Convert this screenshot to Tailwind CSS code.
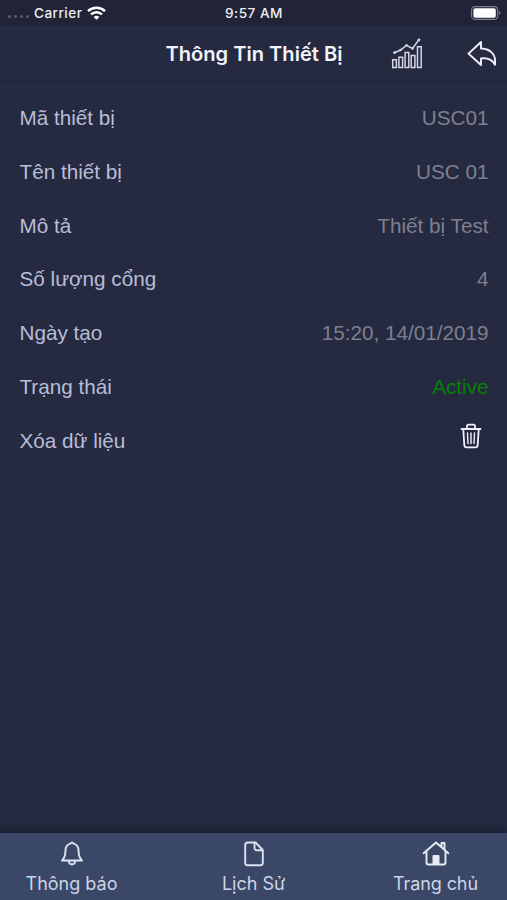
<!doctype html>
<html lang="vi">

<head>
    <meta charset="UTF-8">
    <meta name="viewport" content="width=device-width, initial-scale=1.0">
    <script src="https://cdn.jsdelivr.net/npm/@tailwindcss/browser@4"></script>
    <title>Thông Tin Thiết Bị</title>
</head>

<body class="h-[900px] bg-[#252a40] flex flex-col overflow-hidden font-['Inter',sans-serif]">
    <!-- status bar -->
    <div class="h-[26px] shrink-0 bg-[#202436] grid grid-cols-3 items-center pl-2 pr-[6px] text-[13.6px] font-medium text-[#eceef6]">
        <div class="flex items-center">
            <div class="flex gap-[3px] mt-2 mr-[5px]">
                <i class="size-[3px] rounded-full bg-[#5b5e6e]"></i>
                <i class="size-[3px] rounded-full bg-[#5b5e6e]"></i>
                <i class="size-[3px] rounded-full bg-[#5b5e6e]"></i>
                <i class="size-[3px] rounded-full bg-[#5b5e6e]"></i>
            </div>
            <span class="tracking-[0.45px] pt-px">Carrier</span>
            <svg class="w-[19px] h-[14px] ml-[5px]" viewBox="0 0 19 14" fill="none" stroke="#fff" stroke-width="2.5">
                <path d="M1 5.2C5.8.7 13.200.7 18 5.200" />
                <path d="M4 8.400c3.200-2.900 7.800-2.900 11 0" />
                <path d="M9.500 13.800 6.600 10.900c1.700-1.500 4.100-1.500 5.800 0z" fill="#fff" stroke="none" />
            </svg>
        </div>
        <div class="text-center tracking-[0.5px] pt-px pr-[1px]">9:57 AM</div>
        <div class="flex justify-end">
            <svg class="w-[30px] h-[14px]" viewBox="0 0 30 14">
                <rect x=".6" y=".6" width="26" height="12.800" rx="3.500" fill="none" stroke="#7d7f8c" stroke-width="1.100" />
                <rect x="2.400" y="2.300" width="22.400" height="9.400" rx="1.800" fill="#fff" />
                <path d="M28 4.800c1.800.7 1.800 3.700 0 4.400z" fill="#7d7f8c" />
            </svg>
        </div>
    </div>

    <!-- title bar -->
    <div class="h-[56px] shrink-0 border-b border-[#1f2336] flex items-center relative">
        <h1 id="title" class="w-full pl-px text-center text-[20.1px] leading-[30px] font-semibold text-[#f1f3fb]">Thông Tin Thiết Bị</h1>
        <div class="absolute right-[9.5px] top-[12px] flex gap-[43.5px]">
            <svg class="w-[32px] h-[32px]" viewBox="0 0 32 32" fill="none" stroke="#d3d6e4" stroke-width="1.500">
                <path d="M1.700 21.700h3.700v7.700H1.700zM7.900 19.200h3.700v10.200H7.900zM14.100 14.600h3.700v14.800h-3.700zM20.200 17.600h3.700v11.800h-3.700zM26.500 8.700h3.700v20.700h-3.700z" />
                <path d="M3.500 14.700 9.500 12l6-4.700 6 3.200 6-8.300" />
                <g fill="#d3d6e4" stroke="none">
                    <circle cx="3.500" cy="14.700" r="1.400" />
                    <circle cx="9.500" cy="12" r="1.200" />
                    <circle cx="15.500" cy="7.300" r="1.200" />
                    <circle cx="21.500" cy="10.500" r="1.200" />
                    <circle cx="28" cy="1.900" r="1.400" />
                </g>
            </svg>
            <svg class="w-[31px] h-[32px]" viewBox="0 0 31 32" fill="none" stroke="#f1f3fb" stroke-width="1.900" stroke-linejoin="round">
                <path d="M14 4 1.500 15.600 14 27v-6.600c6.500-.6 11.500 1.400 14 6.300C29.300 16.800 24 10.800 14 10.500z" />
            </svg>
        </div>
    </div>

    <!-- device details -->
    <div class="flex-1 pt-[9px] pl-[19.5px] pr-[18.5px] font-['Liberation_Sans',sans-serif] text-[20.7px] leading-[53.8px] text-[#b9bcd8]">
        <div class="flex justify-between"><span>Mã thiết bị</span><span class="text-[#7e808e]">USC01</span></div>
        <div class="flex justify-between"><span>Tên thiết bị</span><span class="text-[#7e808e]">USC 01</span></div>
        <div class="flex justify-between"><span>Mô tả</span><span class="text-[#7e808e]">Thiết bị Test</span></div>
        <div class="flex justify-between"><span>Số lượng cổng</span><span class="text-[#7e808e]">4</span></div>
        <div class="flex justify-between"><span>Ngày tạo</span><span class="text-[#7e808e]">15:20, 14/01/2019</span></div>
        <div class="flex justify-between"><span>Trạng thái</span><span class="text-[#078007]">Active</span></div>
        <div class="flex justify-between">
            <span>Xóa dữ liệu</span>
            <svg class="w-[22px] h-[26px] mt-[9px] mr-[6.5px]" viewBox="0 0 22 26" fill="none" stroke="#eef0fa" stroke-width="1.800" stroke-linecap="round" stroke-linejoin="round">
                <path d="M1.500 6h19M7 5.500V3.300c0-1 .6-1.600 1.600-1.600h4.800c1 0 1.600.6 1.600 1.600v2.200M3.300 6.500l1 15.500c.1 1.600.9 2.400 2.400 2.400h8.600c1.500 0 2.300-.8 2.400-2.400l1-15.500" />
                <path d="M7.500 10l.5 10.500M11 10v10.500M14.500 10 14 20.500" stroke-width="1.400" />
            </svg>
        </div>
    </div>

    <!-- bottom tabs -->
    <div class="h-[67px] shrink-0 bg-[#3b4767] shadow-[0_-2px_10px_rgba(20,20,35,0.7)] flex items-start text-[18px] leading-[24px] text-[#ccd5e8]">
        <div class="w-[143px] flex flex-col items-center pt-[7px] gap-[5px]">
            <svg class="w-[24px] h-[27px]" viewBox="0 0 24 27" fill="none" stroke="#d9e4f1" stroke-width="1.900" stroke-linejoin="round">
                <path d="M12 2.400c-.9 0-1.300.6-1.500 1.300C7.300 4.500 5.500 7 5.500 10.500c0 5-1 7.500-3.500 10h20c-2.500-2.500-3.500-5-3.500-10 0-3.500-1.800-6-5-6.800-.2-.7-.6-1.300-1.500-1.300z" />
                <path d="M8.800 21c.2 2.200 1.400 3.500 3.200 3.500s3-1.300 3.200-3.500" />
            </svg>
            <span>Thông báo</span>
        </div>
        <div class="flex-1 flex flex-col items-center pt-[7px] gap-[5px]">
            <svg class="w-[22px] h-[27px]" viewBox="0 0 22 27" fill="none" stroke="#d9e4f1" stroke-width="1.900" stroke-linejoin="round">
                <path d="M12.500 2.500H4.800c-1.600 0-2.600 1-2.600 2.600v17.600c0 1.600 1 2.600 2.600 2.600h12.400c1.600 0 2.600-1 2.600-2.600V10z" />
                <path d="M11.500 2.500v5.700c0 1.400.7 2.100 2.100 2.100h6.200" />
            </svg>
            <span>Lịch Sử</span>
        </div>
        <div class="w-[143px] flex flex-col items-center pt-[7px] gap-[5px]">
            <svg class="w-[28px] h-[27px]" viewBox="0 0 28 27" fill="none" stroke="#e2eff0" stroke-width="1.900" stroke-linecap="round" stroke-linejoin="round">
                <path d="M1.600 13.300 14 2.500l12.400 10.800M4.500 11.500v11c0 1.300.7 2 2 2h15c1.300 0 2-.7 2-2v-11M19.500 6.500V3h3v6.200" />
                <path d="M11 24v-8.500h6V24z" fill="#eceaf4" stroke="#eceaf4" stroke-width="1" />
            </svg>
            <span class="tracking-[-0.1px]">Trang chủ</span>
        </div>
    </div>
</body>

</html>
